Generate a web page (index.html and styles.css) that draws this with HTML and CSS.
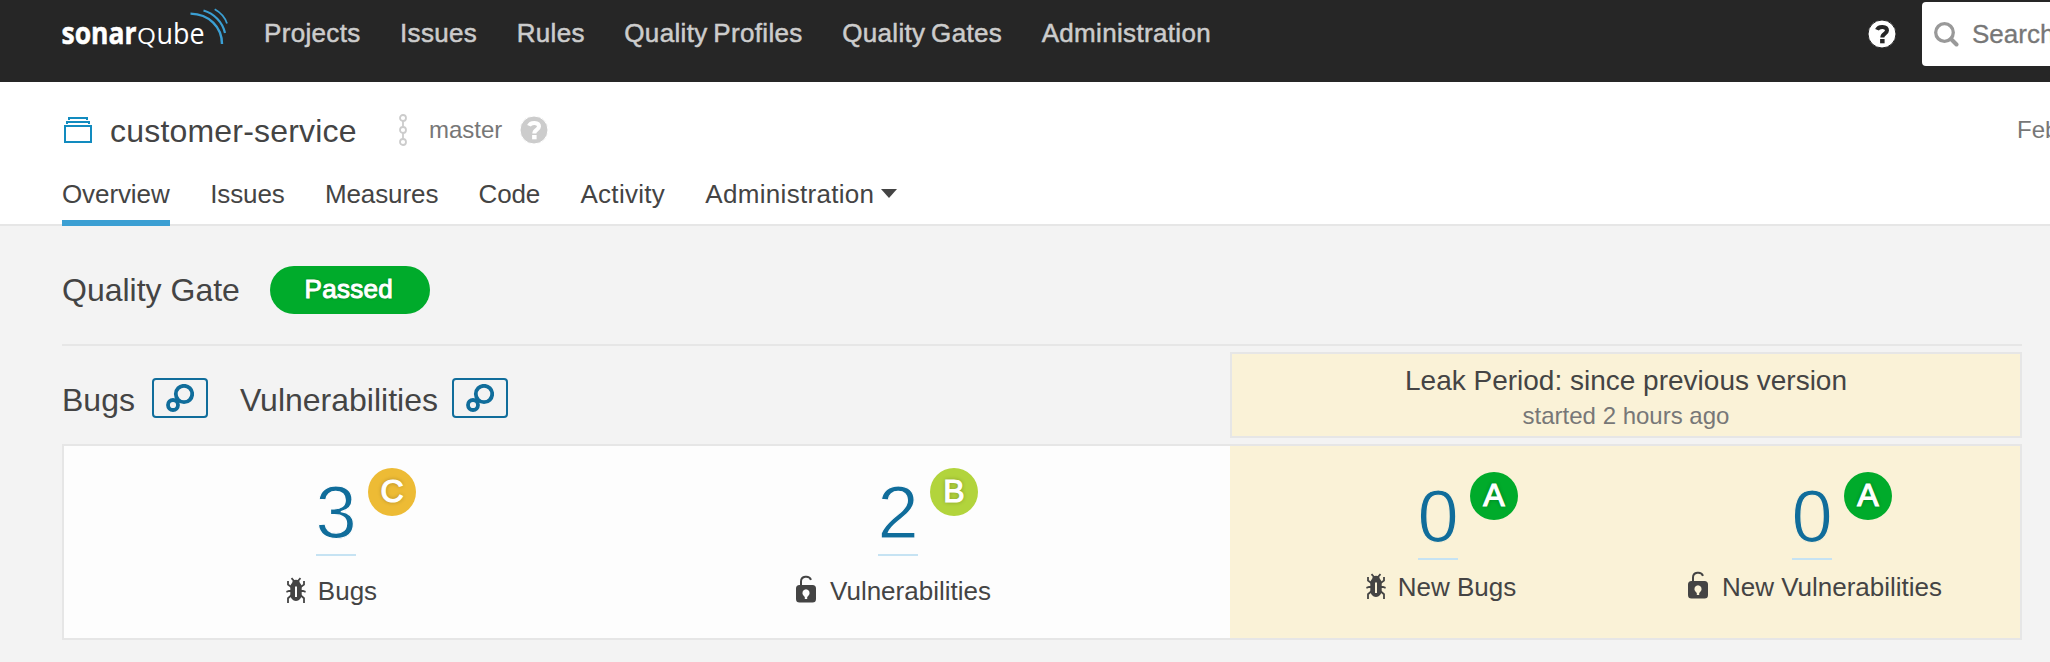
FILE: index.html
```html
<!DOCTYPE html>
<html lang="en">
<head>
<meta charset="utf-8">
<title>customer-service</title>
<link rel="stylesheet" href="styles.css">
</head>
<body>
<svg class="defs" aria-hidden="true">
  <symbol id="bug" viewBox="0 0 20 26">
    <g fill="none" stroke="currentColor" stroke-width="1.8">
      <path d="M5.5 1.2 8.500 4.500M14.500 1.200 11.500 4.500M2 4v3.500l4 3M18 4v3.500l-4 3M.4 14.900 3 14h3M19.600 14.900 17 14h-3M2 26v-4.800l4-3.500M18 26v-4.800l-4-3.500"/>
    </g>
    <path fill="currentColor" fill-rule="evenodd" d="M10 2.800c2.400 0 3.600 1.200 3.900 3.200 1 .8 1.800 2.500 1.800 4.500v7c0 3.500-2.500 6.500-5.700 6.500s-5.700-3-5.700-6.500v-7c0-2 .8-3.700 1.800-4.500.3-2 1.500-3.200 3.900-3.200zM9 9.500v10.500h2V9.500z"/>
  </symbol>
  <symbol id="lock" viewBox="0 0 20 28">
    <path fill="none" stroke="currentColor" stroke-width="2" d="M5 11V6.500C5 1 13 .2 15 4.800"/>
    <path fill="currentColor" fill-rule="evenodd" d="M3.500 10h13A3.500 3.500 0 0 1 20 13.500v10.500a3.500 3.500 0 0 1-3.500 3.500h-13A3.500 3.500 0 0 1 0 24v-10.500A3.500 3.500 0 0 1 3.500 10zM10 14.300a3.700 3.700 0 0 0-2.200 6.600l1 1v2.100h2.400v-2.100l1-1A3.700 3.700 0 0 0 10 14.300z"/>
  </symbol>
  <symbol id="help" viewBox="0 0 28 28">
    <circle cx="14" cy="14" r="14" fill="currentColor"/>
    <path class="help-mark" fill="none" stroke-width="4" d="M9 9.800C10.500 5.800 19 5.800 19 10.500c0 3.200-4.700 3-4.700 7"/>
    <path class="help-dot" d="M12.100 19h4.500v4.300h-4.500z"/>
  </symbol>
  <symbol id="bubbles" viewBox="0 0 28 28">
    <g fill="none" stroke="currentColor" stroke-width="3.800">
      <circle cx="18" cy="10" r="8.200"/><circle cx="7" cy="21" r="5"/>
    </g>
  </symbol>
</svg>

<header class="topbar">
  <svg class="logo" width="172" height="50" viewBox="0 0 172 50">
    <text class="logo-bold" x="-.5" y="44" textLength="75" lengthAdjust="spacingAndGlyphs">sonar</text>
    <text class="logo-q" x="75" y="44" textLength="19" lengthAdjust="spacingAndGlyphs">q</text>
    <text class="logo-light" x="94.500" y="44" textLength="48" lengthAdjust="spacingAndGlyphs">ube</text>
    <g fill="none" stroke="#3b9fd3">
      <path stroke-width="2.400" d="M128.500 13.600C147 14 160 27 160 44"/>
      <path stroke-width="2.200" d="M141.500 10.500C152 13.500 160.500 22 163 33"/>
      <path stroke-width="1.800" d="M152.700 9.300C158.500 12.500 163 17.500 165 23.500"/>
    </g>
  </svg>
  <nav class="menu">
    <a>Projects</a><a>Issues</a><a>Rules</a><a>Quality Profiles</a><a>Quality Gates</a><a>Administration</a>
  </nav>
  <svg class="help help-top"><use href="#help"/></svg>
  <div class="search">
    <svg width="25" height="25" viewBox="0 0 25 25" fill="none" stroke="#999">
      <circle cx="10.500" cy="10.500" r="8.800" stroke-width="3.300"/><path d="M17 17l5.500 5.500" stroke-width="4" stroke-linecap="round"/>
    </svg>
    <span>Search</span>
  </div>
</header>

<section class="project">
  <div class="project-row">
    <svg class="folder" width="28" height="26" viewBox="0 0 28 26" fill="none" stroke="#128bbf" stroke-width="2">
      <path d="M1 9h26v16H1zM3 7V5h22v2M5 3V1h18v2"/>
    </svg>
    <h1>customer-service</h1>
    <svg class="branch" width="8" height="32" viewBox="0 0 8 32" fill="none" stroke="#ccc" stroke-width="1.800">
      <circle cx="4" cy="4" r="3"/><circle cx="4" cy="16" r="3"/><circle cx="4" cy="28" r="3"/><path d="M4 7v6M4 19v6"/>
    </svg>
    <span class="muted">master</span>
    <svg class="help help-branch"><use href="#help"/></svg>
    <span class="muted date">Feb</span>
  </div>
  <nav class="tabs">
    <a class="active">Overview</a><a>Issues</a><a>Measures</a><a>Code</a><a class="wide">Activity</a><a class="wide dropdown">Administration</a>
  </nav>
</section>

<main>
  <div class="gate"><h2>Quality Gate</h2><span class="pill">Passed</span></div>
  <div class="domain">
    <div class="domain-title">
      <h2>Bugs</h2><span class="button"><svg><use href="#bubbles"/></svg></span>
      <h2>Vulnerabilities</h2><span class="button"><svg><use href="#bubbles"/></svg></span>
    </div>
    <div class="leak-legend"><p>Leak Period: since previous version</p><small>started 2 hours ago</small></div>
  </div>
  <div class="card">
    <div class="measures">
      <div class="measure">
        <div class="value"><a>3</a><span class="rating c">C</span></div>
        <div class="label"><svg class="bug"><use href="#bug"/></svg>Bugs</div>
      </div>
      <div class="measure">
        <div class="value"><a>2</a><span class="rating b">B</span></div>
        <div class="label"><svg class="lock"><use href="#lock"/></svg>Vulnerabilities</div>
      </div>
    </div>
    <div class="measures leak">
      <div class="measure">
        <div class="value"><a>0</a><span class="rating">A</span></div>
        <div class="label"><svg class="bug"><use href="#bug"/></svg>New Bugs</div>
      </div>
      <div class="measure">
        <div class="value"><a>0</a><span class="rating">A</span></div>
        <div class="label"><svg class="lock"><use href="#lock"/></svg>New Vulnerabilities</div>
      </div>
    </div>
  </div>
</main>
</body>
</html>
```
FILE: styles.css
```css
* { box-sizing: border-box; }
html { height: 662px; overflow: hidden; background: #f3f3f3; }
body {
  margin: 0;
  height: 662px;
  overflow: hidden;
  background: #f3f3f3;
  color: #444;
  font-family: "Liberation Sans", Arial, sans-serif;
  font-size: 26px;
}
h1, h2, p { margin: 0; font-size: 32px; font-weight: 400; }
svg { display: block; flex: none; }
.defs { width: 0; height: 0; position: absolute; }

.topbar { display: flex; height: 82px; padding-left: 62px; background: #262626; overflow: hidden; }
.logo { overflow: visible; }
.logo text { fill: #fff; font-family: "Open Sans", sans-serif; font-size: 30px; }
.logo .logo-bold { font-weight: 700; stroke: #fff; stroke-width: .5px; }
.logo .logo-q { font-variant-caps: small-caps; }
.menu { display: flex; gap: 39.500px; margin-left: 30px; line-height: 66px; color: #ccc; letter-spacing: .33px; word-spacing: -1.800px; white-space: nowrap; -webkit-text-stroke: .5px #ccc; }
.help { width: 28px; height: 28px; }
.help-top { margin: 20px 26px 0 auto; color: #fff; stroke: #262626; fill: #262626; }
.help-mark { stroke: inherit; }
.help-dot, .help circle { stroke: none; }
.search {
  display: flex;
  align-items: center;
  gap: 13px;
  flex: none;
  width: 200px;
  height: 64px;
  margin: 2px -72px 0 0;
  padding: 1px 0 0 12px;
  border-radius: 4px;
  background: #fff;
  color: #777;
  -webkit-text-stroke: .3px #777;
}

.project { height: 144px; padding-left: 62px; background: #fff; border-bottom: 2px solid #e6e6e6; }
.project-row { display: flex; align-items: center; height: 82px; padding-top: 14px; overflow: hidden; white-space: nowrap; }
.folder { margin: -1px 18px 0 2px; }
.project h1 { width: 289px; padding-top: 2px; letter-spacing: .2px; }
.branch { margin-right: 22px; }
.muted { font-size: 24px; color: #777; }
.help-branch { margin-left: 18px; color: #ccc; stroke: #fff; fill: #fff; }
.date { margin-left: auto; width: 33px; }
.tabs { display: flex; gap: 40.200px; height: 62px; line-height: 61px; letter-spacing: -.1px; }
.tabs a { height: 62px; }
.tabs .wide { letter-spacing: .3px; }
.tabs .active { width: 108px; border-bottom: 6px solid #3b9fd3; }
.dropdown::after {
  content: "";
  display: inline-block;
  margin-left: 7px;
  border: 8px solid transparent;
  border-top: 9px solid #444;
  border-bottom: 0;
  vertical-align: 5px;
}

main { padding: 0 28px 0 62px; }
.gate { display: flex; align-items: center; gap: 30px; height: 120px; padding-top: 10px; border-bottom: 2px solid #e6e6e6; }
.pill {
  width: 160px;
  height: 48px;
  padding-right: 2px;
  border-radius: 24px;
  background: #00ab2b;
  color: #fff;
  line-height: 46px;
  text-align: center;
  letter-spacing: .3px;
  -webkit-text-stroke: 1px #fff;
  text-shadow: 0 0 3px rgba(0, 0, 0, .3);
}
.domain { display: flex; justify-content: space-between; height: 98px; padding-top: 6px; }
.domain-title { display: flex; align-items: flex-start; padding-top: 26px; }
.domain-title h2 { line-height: 45px; }
.button {
  display: flex;
  justify-content: center;
  width: 56px;
  height: 40px;
  margin: 0 32px 0 17px;
  padding-top: 4px;
  border: 2px solid #106d9b;
  border-radius: 4px;
  color: #106d9b;
}
.domain-title .button:last-child { margin-left: 14px; }
.button svg { width: 28px; height: 28px; }
.leak-legend {
  width: 792px;
  height: 86px;
  padding-top: 10px;
  background: #faf2d7;
  border: 2px solid #e6e6e6;
  text-align: center;
}
.leak-legend p { font-size: 28px; line-height: 34px; }
.leak-legend small { display: block; font-size: 24px; line-height: 36px; color: #777; }

.card { display: flex; height: 196px; border: 2px solid #e6e6e6; background: #fdfdfd; }
.measures { --surface: #fdfdfd; display: grid; grid-template-columns: 544px 580px; width: 1166px; background: var(--surface); }
.measures.leak { --surface: #faf2d7; grid-template-columns: 374px 374px; justify-content: center; width: 790px; padding-top: 4px; }
.measure { display: flex; flex-direction: column; align-items: center; }
.value { position: relative; width: 40px; height: 110px; border-bottom: 2px solid #c6e3f3; }
/* The surface-coloured outline trims the digit to a light weight. */
.value a { display: block; margin: 0 -2px; padding-top: 37px; color: #106d9b; font-size: 74px; line-height: 60px; text-align: center; -webkit-text-stroke: 1.100px var(--surface); }
.rating {
  position: absolute;
  left: 52px;
  top: 22px;
  width: 48px;
  height: 48px;
  border-radius: 50%;
  background: #00ab2b;
  color: #fff;
  font-size: 32px;
  line-height: 47px;
  text-align: center;
  -webkit-text-stroke: 1.200px #fff;
  text-shadow: 0 0 4px rgba(0, 0, 0, .35);
}
.rating.b { background: #b2d43c; }
.rating.c { background: #edbb35; }
.label { display: flex; align-items: center; height: 30px; margin: 20px 9px 0 0; white-space: nowrap; }
.leak .label { height: 30px; margin: 12px 0 0 6px; }
.bug { width: 20px; height: 26px; margin: -2px 12px 0 0; }
.lock { width: 20px; height: 28px; margin: -4px 14px 0 0; }
```
